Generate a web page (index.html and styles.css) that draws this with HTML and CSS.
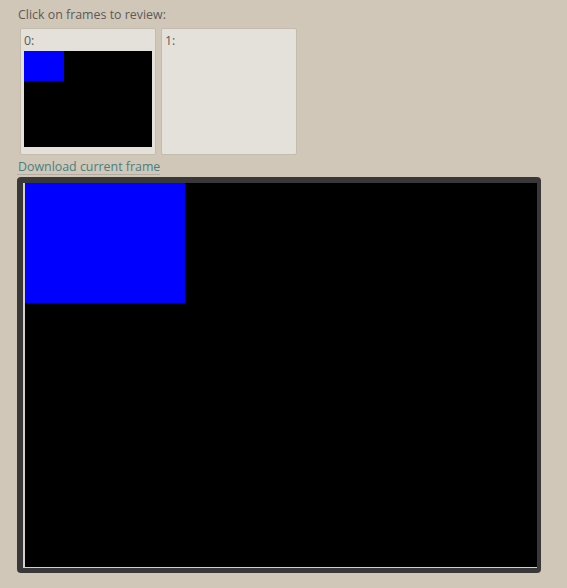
FILE: index.html
```html
<!DOCTYPE html>
<html>
<head>
<meta charset="utf-8">
<link rel="stylesheet" href="styles.css">
</head>
<body>
<div class="page">
  <div class="prompt">Click on frames to review:</div>
  <div class="frames">
    <div class="card">
      <div class="label">0:</div>
      <div class="thumb"><div class="thumb-box"></div></div>
    </div>
    <div class="card">
      <div class="label">1:</div>
    </div>
  </div>
  <a class="download" href="#">Download current frame</a>
  <div class="viewer">
    <div class="viewer-inner">
      <div class="canvas"><div class="canvas-box"></div></div>
    </div>
  </div>
</div>
</body>
</html>
```

FILE: styles.css
```css
html, body {
  margin: 0;
  padding: 0;
  background: #d0c7b9;
}
body {
  font-family: "Open Sans", "DejaVu Sans", sans-serif;
  font-size: 12.4px;
  color: #5e5a55;
}
.page {
  padding: 6px 0 0 17px;
  display: flex;
  flex-direction: column;
  align-items: flex-start;
}
.prompt {
  line-height: 18px;
  padding-left: 1px;
}
.frames {
  display: flex;
  gap: 5px;
  margin: 4px 0 0 3px;
}
.card {
  box-sizing: border-box;
  width: 136px;
  height: 127px;
  background: #e4e0da;
  border: 1px solid #c3bbae;
  border-radius: 2px;
  padding: 3px 3px 3px 3px;
}
.label {
  line-height: 18px;
  height: 19px;
}
.thumb {
  position: relative;
  width: 128px;
  height: 96px;
  background: #000;
}
.thumb-box {
  width: 40px;
  height: 30px;
  background: #0000ff;
}
.download {
  margin-top: 4px;
  padding-left: 1px;
  color: #4a7f7f;
  text-decoration: none;
  line-height: 15px;
  border-bottom: 1px solid #b5ada1;
}
.viewer {
  margin-top: 2px;
  background: #383838;
  border-radius: 4px;
  padding: 6px 4px 5px 6px;
}
.viewer-inner {
  border-left: 2px solid #d8d0c4;
  border-bottom: 1px solid #d8d0c4;
}
.canvas {
  width: 512px;
  height: 384px;
  background: #000;
}
.canvas-box {
  width: 160px;
  height: 120px;
  background: #0000ff;
}
```
